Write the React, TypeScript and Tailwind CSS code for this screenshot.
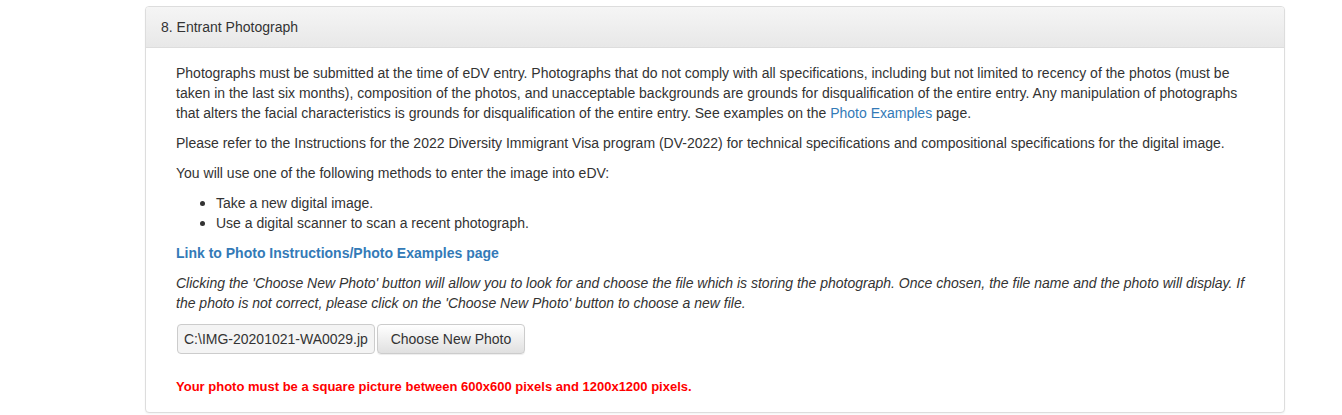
import React from 'react';

export default function App() {
  return (
    <div className="min-h-[415px] bg-white pt-[6px] font-['Liberation_Sans',Arial,sans-serif] text-[14px] leading-[20px] text-[#333]">
      <div className="ml-[145px] w-[1140px] rounded-[4px] border border-[#ddd] bg-white shadow-[0_1px_2px_rgba(0,0,0,0.05)]">
        {/* Panel heading */}
        <div className="rounded-t-[3px] border-b border-[#ddd] bg-gradient-to-b from-[#f5f5f5] to-[#e8e8e8] px-[15px] py-[10px]">
          <h3 className="text-[14px] leading-[20px] text-[#333]">8. Entrant Photograph</h3>
        </div>

        {/* Panel body */}
        <div className="p-[15px]">
          <div className="px-[15px]">
            <p className="mb-[10px]">
              Photographs must be submitted at the time of eDV entry. Photographs that do not comply with all specifications, including but not limited to recency of the photos (must be taken in the last six months), composition of the photos, and unacceptable backgrounds are grounds for disqualification of the entire entry. Any manipulation of photographs that alters the facial characteristics is grounds for disqualification of the entire entry. See examples on the{' '}
              <a href="#" className="text-[#337ab7]">Photo Examples</a> page.
            </p>
            <p className="mb-[10px]">
              Please refer to the Instructions for the 2022 Diversity Immigrant Visa program (DV-2022) for technical specifications and compositional specifications for the digital image.
            </p>
            <p className="mb-[10px]">You will use one of the following methods to enter the image into eDV:</p>
            <ul className="mb-[10px] list-disc pl-[40px] marker:text-[16px]">
              <li>Take a new digital image.</li>
              <li>Use a digital scanner to scan a recent photograph.</li>
            </ul>
            <p className="mb-[10px]">
              <a href="#" className="font-bold text-[#337ab7]">Link to Photo Instructions/Photo Examples page</a>
            </p>
            <p className="mb-[10px] italic">
              Clicking the 'Choose New Photo' button will allow you to look for and choose the file which is storing the photograph. Once chosen, the file name and the photo will display. If the photo is not correct, please click on the 'Choose New Photo' button to choose a new file.
            </p>

            <div className="ml-[1px] flex items-center gap-[2px] pt-[1px]">
              <div className="h-[30px] w-[198px] rounded-[4px] border border-[#ccc] bg-[#f4f4f4] px-[6px] text-[#333]">
                <div className="overflow-hidden whitespace-nowrap leading-[28px]">C:\IMG-20201021-WA0029.jpg</div>
              </div>
              <button className="h-[30px] w-[148px] rounded-[4px] border border-[#ccc] bg-gradient-to-b from-white to-[#e0e0e0] text-[14px] text-[#333] shadow-[inset_0_1px_0_rgba(255,255,255,0.15),0_1px_1px_rgba(0,0,0,0.075)]">
                Choose New Photo
              </button>
            </div>

            <p className="mt-[23px] text-[13px] font-bold leading-[20px] text-[#f00]">
              Your photo must be a square picture between 600x600 pixels and 1200x1200 pixels.
            </p>
          </div>
        </div>
      </div>
    </div>
  );
}
